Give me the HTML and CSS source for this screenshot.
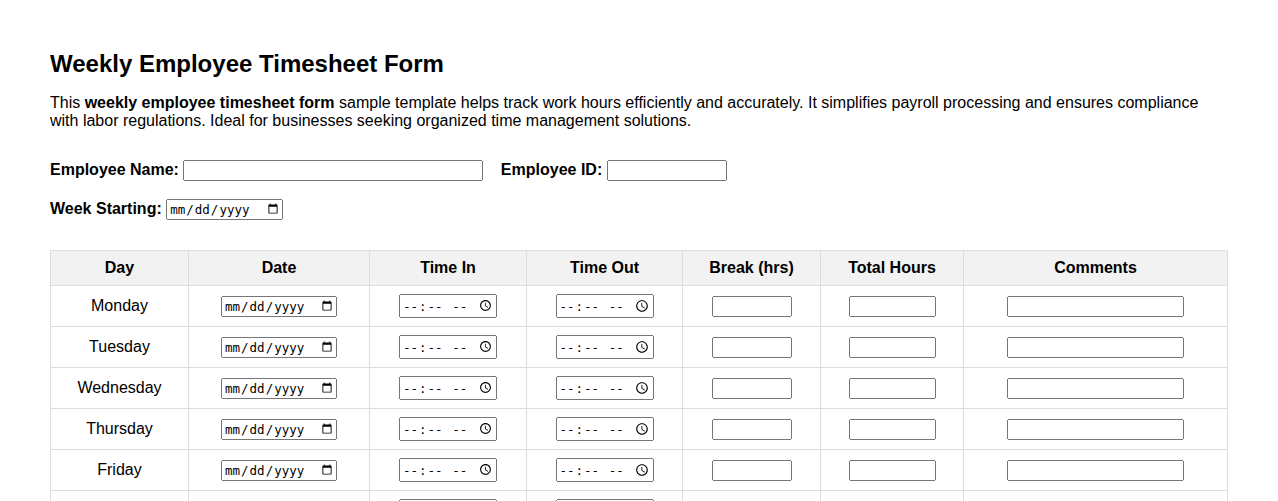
FILE: index.html
```html
<!DOCTYPE html>
<html lang="en">
<head>
<meta charset="utf-8">
<title>Weekly Employee Timesheet Form</title>
<link rel="stylesheet" href="styles.css">
</head>
<body>
<h1 class="title">Weekly Employee Timesheet Form</h1>
<p class="intro">This <strong>weekly employee timesheet form</strong> sample template helps track work hours efficiently and accurately. It simplifies payroll processing and ensures compliance with labor regulations. Ideal for businesses seeking organized time management solutions.</p>
<form class="sheet">
  <div class="field-row">
    <label class="field"><span class="label">Employee Name:</span> <input type="text" class="in-name"></label>
    <label class="field"><span class="label">Employee ID:</span> <input type="text" class="in-id"></label>
  </div>
  <div class="field-row">
    <label class="field"><span class="label">Week Starting:</span> <input type="date" class="in-week"></label>
  </div>
  <table class="grid">
    <colgroup>
      <col class="c-day"><col class="c-date"><col class="c-in"><col class="c-out"><col class="c-break"><col class="c-total"><col class="c-comm">
    </colgroup>
    <thead>
      <tr><th>Day</th><th>Date</th><th>Time In</th><th>Time Out</th><th>Break (hrs)</th><th>Total Hours</th><th>Comments</th></tr>
    </thead>
    <tbody>
      <tr><td>Monday</td><td><input type="date" class="in-date"></td><td><input type="time" class="in-time"></td><td><input type="time" class="in-time"></td><td><input type="text" class="in-break"></td><td><input type="text" class="in-total"></td><td><input type="text" class="in-comm"></td></tr>
      <tr><td>Tuesday</td><td><input type="date" class="in-date"></td><td><input type="time" class="in-time"></td><td><input type="time" class="in-time"></td><td><input type="text" class="in-break"></td><td><input type="text" class="in-total"></td><td><input type="text" class="in-comm"></td></tr>
      <tr><td>Wednesday</td><td><input type="date" class="in-date"></td><td><input type="time" class="in-time"></td><td><input type="time" class="in-time"></td><td><input type="text" class="in-break"></td><td><input type="text" class="in-total"></td><td><input type="text" class="in-comm"></td></tr>
      <tr><td>Thursday</td><td><input type="date" class="in-date"></td><td><input type="time" class="in-time"></td><td><input type="time" class="in-time"></td><td><input type="text" class="in-break"></td><td><input type="text" class="in-total"></td><td><input type="text" class="in-comm"></td></tr>
      <tr><td>Friday</td><td><input type="date" class="in-date"></td><td><input type="time" class="in-time"></td><td><input type="time" class="in-time"></td><td><input type="text" class="in-break"></td><td><input type="text" class="in-total"></td><td><input type="text" class="in-comm"></td></tr>
      <tr><td>Saturday</td><td><input type="date" class="in-date"></td><td><input type="time" class="in-time"></td><td><input type="time" class="in-time"></td><td><input type="text" class="in-break"></td><td><input type="text" class="in-total"></td><td><input type="text" class="in-comm"></td></tr>
      <tr><td>Sunday</td><td><input type="date" class="in-date"></td><td><input type="time" class="in-time"></td><td><input type="time" class="in-time"></td><td><input type="text" class="in-break"></td><td><input type="text" class="in-total"></td><td><input type="text" class="in-comm"></td></tr>
    </tbody>
  </table>
</form>
</body>
</html>
```
FILE: styles.css
```css
body {
  margin: 50px;
  font-family: "Liberation Sans", Arial, sans-serif;
  font-size: 16px;
  color: #000;
  background: #fff;
}
.title {
  font-size: 24px;
  font-weight: bold;
  margin: 0 0 16px;
}
.intro {
  margin: 0 0 30px;
}
.field-row {
  margin-bottom: 18px;
}
.field {
  margin-right: 13px;
}
.label {
  font-weight: bold;
}
input {
  box-sizing: border-box;
}
.in-name { width: 300px; }
.in-id { width: 120px; }
.in-week,
.in-date,
.in-time {
  font-size: 12.5px;
}
.in-week { width: 117px; height: 21px; }
.grid {
  width: 100%;
  border-collapse: collapse;
  table-layout: fixed;
  margin-top: 30px;
}
.grid th,
.grid td {
  border: 1px solid #ddd;
  padding: 8px;
  text-align: center;
}
.grid th {
  background: #f2f2f2;
  font-weight: bold;
}
.c-day { width: 138px; }
.c-date { width: 181px; }
.c-in { width: 157px; }
.c-out { width: 156px; }
.c-break { width: 138px; }
.c-total { width: 143px; }
.in-date { width: 116px; height: 21px; }
.in-time { width: 98px; height: 24px; }
.in-break { width: 80px; }
.in-total { width: 87px; }
.in-comm { width: 177px; }
```
